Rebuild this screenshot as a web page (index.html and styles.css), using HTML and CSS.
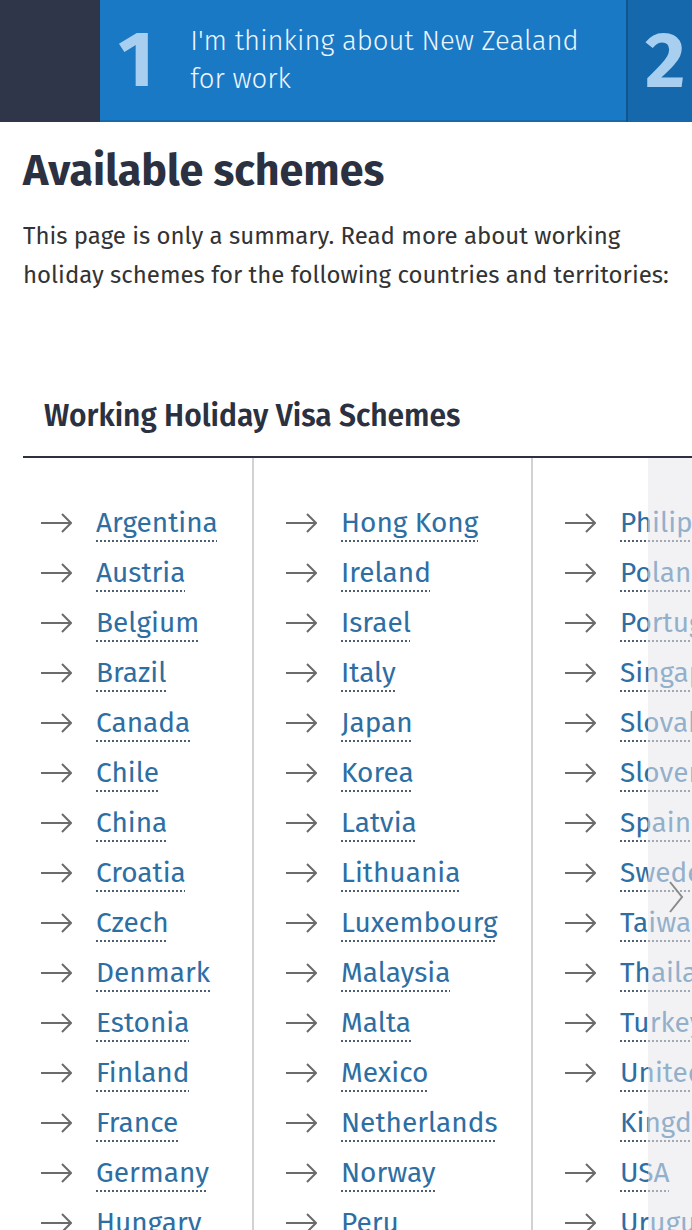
FILE: index.html
```html
<!DOCTYPE html>
<html lang="en">
<head>
    <meta charset="UTF-8">
    <meta name="viewport" content="width=device-width, initial-scale=1.0">
    <title>Working holiday schemes</title>
    <link rel="stylesheet" href="styles.css">
</head>
<body>
    <!-- Step bar -->
    <header class="steps">
        <div class="step-back"></div>
        <div class="step step-current">
            <span class="step-num">1</span>
            <span class="step-label">I'm thinking about New Zealand for work</span>
        </div>
        <div class="step step-next">
            <span class="step-num">2</span>
        </div>
    </header>

    <main class="content">
        <h1 class="page-title">Available schemes</h1>
        <p class="intro">This page is only a summary. Read more about working holiday schemes for the following countries and territories:</p>

        <h2 class="table-title">Working Holiday Visa Schemes</h2>

        <div class="table-scroll">
            <div class="scheme-table">
                <ul class="scheme-col col-first">
                    <li><span class="arrow"><svg width="31" height="20" viewBox="0 0 31 20"><path d="M0 10H30M21 1L30 10L21 19" fill="none" stroke="#6b6b6b" stroke-width="2"/></svg></span><a href="#">Argentina</a></li>
                    <li><span class="arrow"><svg width="31" height="20" viewBox="0 0 31 20"><path d="M0 10H30M21 1L30 10L21 19" fill="none" stroke="#6b6b6b" stroke-width="2"/></svg></span><a href="#">Austria</a></li>
                    <li><span class="arrow"><svg width="31" height="20" viewBox="0 0 31 20"><path d="M0 10H30M21 1L30 10L21 19" fill="none" stroke="#6b6b6b" stroke-width="2"/></svg></span><a href="#">Belgium</a></li>
                    <li><span class="arrow"><svg width="31" height="20" viewBox="0 0 31 20"><path d="M0 10H30M21 1L30 10L21 19" fill="none" stroke="#6b6b6b" stroke-width="2"/></svg></span><a href="#">Brazil</a></li>
                    <li><span class="arrow"><svg width="31" height="20" viewBox="0 0 31 20"><path d="M0 10H30M21 1L30 10L21 19" fill="none" stroke="#6b6b6b" stroke-width="2"/></svg></span><a href="#">Canada</a></li>
                    <li><span class="arrow"><svg width="31" height="20" viewBox="0 0 31 20"><path d="M0 10H30M21 1L30 10L21 19" fill="none" stroke="#6b6b6b" stroke-width="2"/></svg></span><a href="#">Chile</a></li>
                    <li><span class="arrow"><svg width="31" height="20" viewBox="0 0 31 20"><path d="M0 10H30M21 1L30 10L21 19" fill="none" stroke="#6b6b6b" stroke-width="2"/></svg></span><a href="#">China</a></li>
                    <li><span class="arrow"><svg width="31" height="20" viewBox="0 0 31 20"><path d="M0 10H30M21 1L30 10L21 19" fill="none" stroke="#6b6b6b" stroke-width="2"/></svg></span><a href="#">Croatia</a></li>
                    <li><span class="arrow"><svg width="31" height="20" viewBox="0 0 31 20"><path d="M0 10H30M21 1L30 10L21 19" fill="none" stroke="#6b6b6b" stroke-width="2"/></svg></span><a href="#">Czech</a></li>
                    <li><span class="arrow"><svg width="31" height="20" viewBox="0 0 31 20"><path d="M0 10H30M21 1L30 10L21 19" fill="none" stroke="#6b6b6b" stroke-width="2"/></svg></span><a href="#">Denmark</a></li>
                    <li><span class="arrow"><svg width="31" height="20" viewBox="0 0 31 20"><path d="M0 10H30M21 1L30 10L21 19" fill="none" stroke="#6b6b6b" stroke-width="2"/></svg></span><a href="#">Estonia</a></li>
                    <li><span class="arrow"><svg width="31" height="20" viewBox="0 0 31 20"><path d="M0 10H30M21 1L30 10L21 19" fill="none" stroke="#6b6b6b" stroke-width="2"/></svg></span><a href="#">Finland</a></li>
                    <li><span class="arrow"><svg width="31" height="20" viewBox="0 0 31 20"><path d="M0 10H30M21 1L30 10L21 19" fill="none" stroke="#6b6b6b" stroke-width="2"/></svg></span><a href="#">France</a></li>
                    <li><span class="arrow"><svg width="31" height="20" viewBox="0 0 31 20"><path d="M0 10H30M21 1L30 10L21 19" fill="none" stroke="#6b6b6b" stroke-width="2"/></svg></span><a href="#">Germany</a></li>
                    <li><span class="arrow"><svg width="31" height="20" viewBox="0 0 31 20"><path d="M0 10H30M21 1L30 10L21 19" fill="none" stroke="#6b6b6b" stroke-width="2"/></svg></span><a href="#">Hungary</a></li>
                </ul>
                <ul class="scheme-col">
                    <li><span class="arrow"><svg width="31" height="20" viewBox="0 0 31 20"><path d="M0 10H30M21 1L30 10L21 19" fill="none" stroke="#6b6b6b" stroke-width="2"/></svg></span><a href="#">Hong Kong</a></li>
                    <li><span class="arrow"><svg width="31" height="20" viewBox="0 0 31 20"><path d="M0 10H30M21 1L30 10L21 19" fill="none" stroke="#6b6b6b" stroke-width="2"/></svg></span><a href="#">Ireland</a></li>
                    <li><span class="arrow"><svg width="31" height="20" viewBox="0 0 31 20"><path d="M0 10H30M21 1L30 10L21 19" fill="none" stroke="#6b6b6b" stroke-width="2"/></svg></span><a href="#">Israel</a></li>
                    <li><span class="arrow"><svg width="31" height="20" viewBox="0 0 31 20"><path d="M0 10H30M21 1L30 10L21 19" fill="none" stroke="#6b6b6b" stroke-width="2"/></svg></span><a href="#">Italy</a></li>
                    <li><span class="arrow"><svg width="31" height="20" viewBox="0 0 31 20"><path d="M0 10H30M21 1L30 10L21 19" fill="none" stroke="#6b6b6b" stroke-width="2"/></svg></span><a href="#">Japan</a></li>
                    <li><span class="arrow"><svg width="31" height="20" viewBox="0 0 31 20"><path d="M0 10H30M21 1L30 10L21 19" fill="none" stroke="#6b6b6b" stroke-width="2"/></svg></span><a href="#">Korea</a></li>
                    <li><span class="arrow"><svg width="31" height="20" viewBox="0 0 31 20"><path d="M0 10H30M21 1L30 10L21 19" fill="none" stroke="#6b6b6b" stroke-width="2"/></svg></span><a href="#">Latvia</a></li>
                    <li><span class="arrow"><svg width="31" height="20" viewBox="0 0 31 20"><path d="M0 10H30M21 1L30 10L21 19" fill="none" stroke="#6b6b6b" stroke-width="2"/></svg></span><a href="#">Lithuania</a></li>
                    <li><span class="arrow"><svg width="31" height="20" viewBox="0 0 31 20"><path d="M0 10H30M21 1L30 10L21 19" fill="none" stroke="#6b6b6b" stroke-width="2"/></svg></span><a href="#">Luxembourg</a></li>
                    <li><span class="arrow"><svg width="31" height="20" viewBox="0 0 31 20"><path d="M0 10H30M21 1L30 10L21 19" fill="none" stroke="#6b6b6b" stroke-width="2"/></svg></span><a href="#">Malaysia</a></li>
                    <li><span class="arrow"><svg width="31" height="20" viewBox="0 0 31 20"><path d="M0 10H30M21 1L30 10L21 19" fill="none" stroke="#6b6b6b" stroke-width="2"/></svg></span><a href="#">Malta</a></li>
                    <li><span class="arrow"><svg width="31" height="20" viewBox="0 0 31 20"><path d="M0 10H30M21 1L30 10L21 19" fill="none" stroke="#6b6b6b" stroke-width="2"/></svg></span><a href="#">Mexico</a></li>
                    <li><span class="arrow"><svg width="31" height="20" viewBox="0 0 31 20"><path d="M0 10H30M21 1L30 10L21 19" fill="none" stroke="#6b6b6b" stroke-width="2"/></svg></span><a href="#">Netherlands</a></li>
                    <li><span class="arrow"><svg width="31" height="20" viewBox="0 0 31 20"><path d="M0 10H30M21 1L30 10L21 19" fill="none" stroke="#6b6b6b" stroke-width="2"/></svg></span><a href="#">Norway</a></li>
                    <li><span class="arrow"><svg width="31" height="20" viewBox="0 0 31 20"><path d="M0 10H30M21 1L30 10L21 19" fill="none" stroke="#6b6b6b" stroke-width="2"/></svg></span><a href="#">Peru</a></li>
                </ul>
                <ul class="scheme-col col-last">
                    <li><span class="arrow"><svg width="31" height="20" viewBox="0 0 31 20"><path d="M0 10H30M21 1L30 10L21 19" fill="none" stroke="#6b6b6b" stroke-width="2"/></svg></span><a href="#">Philippines</a></li>
                    <li><span class="arrow"><svg width="31" height="20" viewBox="0 0 31 20"><path d="M0 10H30M21 1L30 10L21 19" fill="none" stroke="#6b6b6b" stroke-width="2"/></svg></span><a href="#">Poland</a></li>
                    <li><span class="arrow"><svg width="31" height="20" viewBox="0 0 31 20"><path d="M0 10H30M21 1L30 10L21 19" fill="none" stroke="#6b6b6b" stroke-width="2"/></svg></span><a href="#">Portugal</a></li>
                    <li><span class="arrow"><svg width="31" height="20" viewBox="0 0 31 20"><path d="M0 10H30M21 1L30 10L21 19" fill="none" stroke="#6b6b6b" stroke-width="2"/></svg></span><a href="#">Singapore</a></li>
                    <li><span class="arrow"><svg width="31" height="20" viewBox="0 0 31 20"><path d="M0 10H30M21 1L30 10L21 19" fill="none" stroke="#6b6b6b" stroke-width="2"/></svg></span><a href="#">Slovakia</a></li>
                    <li><span class="arrow"><svg width="31" height="20" viewBox="0 0 31 20"><path d="M0 10H30M21 1L30 10L21 19" fill="none" stroke="#6b6b6b" stroke-width="2"/></svg></span><a href="#">Slovenia</a></li>
                    <li><span class="arrow"><svg width="31" height="20" viewBox="0 0 31 20"><path d="M0 10H30M21 1L30 10L21 19" fill="none" stroke="#6b6b6b" stroke-width="2"/></svg></span><a href="#">Spain</a></li>
                    <li><span class="arrow"><svg width="31" height="20" viewBox="0 0 31 20"><path d="M0 10H30M21 1L30 10L21 19" fill="none" stroke="#6b6b6b" stroke-width="2"/></svg></span><a href="#">Sweden</a></li>
                    <li><span class="arrow"><svg width="31" height="20" viewBox="0 0 31 20"><path d="M0 10H30M21 1L30 10L21 19" fill="none" stroke="#6b6b6b" stroke-width="2"/></svg></span><a href="#">Taiwan</a></li>
                    <li><span class="arrow"><svg width="31" height="20" viewBox="0 0 31 20"><path d="M0 10H30M21 1L30 10L21 19" fill="none" stroke="#6b6b6b" stroke-width="2"/></svg></span><a href="#">Thailand</a></li>
                    <li><span class="arrow"><svg width="31" height="20" viewBox="0 0 31 20"><path d="M0 10H30M21 1L30 10L21 19" fill="none" stroke="#6b6b6b" stroke-width="2"/></svg></span><a href="#">Turkey</a></li>
                    <li><span class="arrow"><svg width="31" height="20" viewBox="0 0 31 20"><path d="M0 10H30M21 1L30 10L21 19" fill="none" stroke="#6b6b6b" stroke-width="2"/></svg></span><a href="#">United Kingdom</a></li>
                    <li><span class="arrow"><svg width="31" height="20" viewBox="0 0 31 20"><path d="M0 10H30M21 1L30 10L21 19" fill="none" stroke="#6b6b6b" stroke-width="2"/></svg></span><a href="#">USA</a></li>
                    <li><span class="arrow"><svg width="31" height="20" viewBox="0 0 31 20"><path d="M0 10H30M21 1L30 10L21 19" fill="none" stroke="#6b6b6b" stroke-width="2"/></svg></span><a href="#">Uruguay</a></li>
                </ul>
            </div>

            <!-- Scroll hint over the right edge -->
            <div class="scroll-fade">
                <svg class="scroll-chevron" width="16" height="32" viewBox="0 0 16 32"><path d="M2 1L14 16L2 31" fill="none" stroke="#8a8a8a" stroke-width="2"/></svg>
            </div>
        </div>
    </main>
</body>
</html>
```

FILE: styles.css
```css
/* General Styles */
body {
    font-family: 'Fira Sans', 'Open Sans', sans-serif;
    margin: 0;
    padding: 0;
    background-color: #fff;
    color: #2b3140;
}

/* Step bar */
.steps {
    display: flex;
    height: 122px;
}

.step-back {
    width: 100px;
    background-color: #30364a;
}

.step {
    display: flex;
    align-items: center;
}

.step-current {
    width: 526px;
    padding-left: 18px;
    box-sizing: border-box;
    background-color: #1a79c4;
    border-bottom: 2px solid #166aab;
}

.step-next {
    flex: 1;
    padding-left: 17px;
    background-color: #1468ab;
    border-left: 2px solid #10558d;
}

.step-num {
    font-size: 78px;
    font-weight: 700;
    color: #a8cff0;
    line-height: 1;
}

.step-label {
    max-width: 400px;
    margin-left: 36px;
    font-size: 27.5px;
    font-weight: 300;
    line-height: 38px;
    color: #eef5fc;
}

/* Intro */
.content {
    padding-top: 25px;
}

.page-title {
    margin: 0 23px;
    font-size: 43px;
    font-weight: 700;
    line-height: 48px;
    color: #2b3140;
}

.intro {
    margin: 22px 23px 0;
    font-size: 24px;
    font-weight: 400;
    line-height: 39px;
    color: #333;
}

.table-title {
    margin: 102px 0 0 44px;
    font-size: 30px;
    font-weight: 600;
    line-height: 38px;
    color: #2b3140;
}

/* Scheme table */
.table-scroll {
    position: relative;
    overflow: hidden;
    margin: 21px 0 0 23px;
    border-top: 2px solid #2b3140;
}

.scheme-table {
    display: grid;
    grid-template-columns: 229px 279px 290px;
    width: max-content;
}

.scheme-col {
    list-style: none;
    margin: 0;
    padding: 40px 32px 0;
    border-left: 2px solid #d2d2d2;
}

.scheme-col.col-first {
    padding-left: 18px;
    border-left: none;
}

.scheme-col li {
    display: flex;
    align-items: flex-start;
}

.arrow {
    display: flex;
    align-items: center;
    flex-shrink: 0;
    height: 50px;
    margin-right: 24px;
}

.scheme-col a {
    font-size: 28px;
    line-height: 50px;
    color: #2d6ea3;
    text-decoration: underline dotted 2px #4d5f70;
    text-underline-offset: 8px;
}

.scroll-fade {
    position: absolute;
    top: 0;
    right: 0;
    bottom: 0;
    width: 44px;
    background-color: rgba(232, 232, 236, 0.55);
}

.scroll-chevron {
    position: absolute;
    top: 423px;
    left: 20px;
}
```
